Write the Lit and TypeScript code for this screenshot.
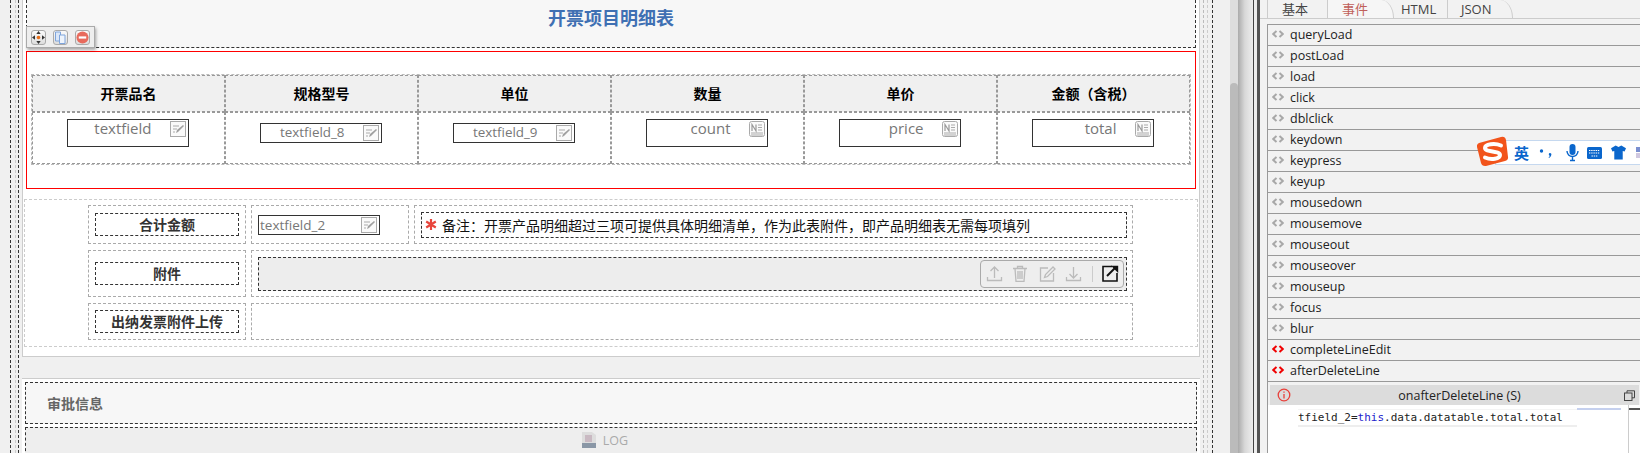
import { LitElement, html, css } from "lit";
import { customElement } from "lit/decorators.js";

const editIcon = html`<svg class="fi" viewBox="0 0 16 16" width="16" height="16"><rect x=".5" y=".5" width="15" height="15" fill="#fafafa" stroke="#aaa"/><path d="M3 5h6M3 8h4M3 11h2" stroke="#aaa" fill="none"/><path d="M6 12l1-3 6-5 1 1-6 6z" fill="#a0a0a0"/></svg>`;
const numIcon = html`<svg class="fi" viewBox="0 0 16 16" width="16" height="16"><rect x=".5" y=".5" width="15" height="15" rx="2" fill="#fafafa" stroke="#aaa"/><path d="M3 10V3.500L7 10V3.500" stroke="#999" stroke-width="1.200" fill="none"/><path d="M9 4h4M9 6.500h4M9 9h4M2 12h12M2 14h12" stroke="#aaa" fill="none"/></svg>`;

const tf = (label: string, big: boolean, num = false) => html`<div class="cell body"><div class="field ${big ? "big" : "small"}"><span>${label}</span>${num ? numIcon : editIcon}</div></div>`;

const rows = ["queryLoad","postLoad","load","click","dblclick","keydown","keypress","keyup","mousedown","mousemove","mouseout","mouseover","mouseup","focus","blur","completeLineEdit","afterDeleteLine"];
const active = new Set(["completeLineEdit","afterDeleteLine"]);

const chevrons = (on: boolean) => html`<svg class="chev" viewBox="0 0 12 8" width="12" height="8"><path d="M4.500 1L1.200 4l3.300 3M7.500 1l3.300 3-3.300 3" fill="none" stroke="${on ? "#f00000" : "#a8a8a8"}" stroke-width="2"/></svg>`;

@customElement("app-root")
export class AppRoot extends LitElement {
  static styles = css`
    :host { display: block; width: 1640px; height: 453px; overflow: hidden; background: #f0f0f0; font-family: "Open Sans", "Noto Sans CJK SC", sans-serif; color: #222; }
    * { box-sizing: border-box; }
    .shell { display: flex; height: 453px; position: relative; }
    .left { width: 1230px; height: 453px; overflow: hidden; flex: none; }
    .o1 { margin-left: 10px; width: 1203px; height: 453px; border-left: 1px dashed #333; border-right: 1px dashed #333; padding: 0 4px; }
    .o2 { height: 453px; border-left: 1px dashed #ccc; border-right: 1px dashed #ccc; padding: 0 3px 0 2px; }
    .o3 { height: 453px; border-left: 1px dashed #333; border-right: 1px dashed #bbb; padding: 0 3px; }
    .panel { background: #fff; border: 1px solid #ccc; border-top: none; height: 357px; padding: 0 3px; }
    .panel2 { margin-top: 21px; height: 75px; background: #fff; border: none; border-top: 1px solid #ccc; padding: 3px 3px 0; }
    .title { position: relative; height: 48px; background: #f7f7f7; border: 1px dashed #333; border-top: none; text-align: center; font-weight: 700; font-size: 18px; line-height: 24px; padding-top: 6px; color: #3f70b3; }
    .handle { position: absolute; left: -1px; top: 26px; width: 69px; height: 22px; background: #eee; border: 1px solid #aaa; box-shadow: 1px 2px 3px rgba(0,0,0,.35); display: flex; gap: 7px; padding: 3px 0 0 4px; }
    .hbtn { width: 15px; height: 15px; border: 1px solid #aaa; border-radius: 3px; background: linear-gradient(#fafafa,#ddd); display: flex; align-items: center; justify-content: center; }
    .red { margin-top: 3px; height: 138px; border: 1px solid #f00; padding: 22px 4px 0 4px; background: #fff; }
    .table { border: 1px dashed #bbb; display: grid; grid-template-columns: repeat(6, 1fr); grid-template-rows: 37px 52px; }
    .cell { border: 1px dashed #999; }
    .head { background: #f0f0f0; font-weight: 700; font-size: 14px; color: #000; display: flex; align-items: center; justify-content: center; padding-bottom: 2px; }
    .body { display: flex; justify-content: center; align-items: flex-start; padding-right: 2px; }
    .field { width: 122px; border: 1px solid #333; position: relative; background: #fff; color: #777; text-align: right; padding-right: 36px; }
    .fi { position: absolute; right: 2px; top: 1px; }
    .big { height: 28px; margin-top: 6px; font-size: 15px; line-height: 16px; }
    .small { height: 20px; margin-top: 10px; font-size: 13.4px; line-height: 17px; }
    .form { margin: 10px -2px 0; height: 148px; border: 1px dashed #ccc; padding: 5px 0 0 63px; display: grid; grid-template-columns: 158px 158px 719px; grid-template-rows: 39px 47px 37px; column-gap: 5px; row-gap: 6px; align-content: start; }
    .fc { border: 1px dashed #aaa; display: flex; align-items: center; padding: 0 6px; }
    .fc.wide { padding-right: 5px; }
    .label { width: 144px; height: 23px; border: 1px dashed #333; font-weight: 700; font-size: 14px; color: #333; display: flex; align-items: center; justify-content: center; padding-bottom: 1px; }
    .f2 { width: 122px; height: 20px; border: 1px solid #333; position: relative; background: #fff; color: #777; font-size: 13.5px; line-height: 18px; padding-left: 1px; }
    .note { flex: 1; height: 26px; border: 1px dashed #333; display: flex; align-items: center; gap: 5px; padding-left: 3px; font-size: 14px; color: #111; }
    .attach { flex: 1; height: 34px; border: 1px dashed #333; background: #ededed; display: flex; justify-content: flex-end; padding: 2px 2px 0 0; }
    .span2 { grid-column: span 2; }
    .tools { width: 144px; height: 28px; border: 1px solid #aaa; border-radius: 4px; background: #eee; display: flex; align-items: center; padding-left: 5px; gap: 9px; }
    .tools .gap { margin-left: 2px; }
    .sep { width: 1px; height: 16px; background: #ccc; margin: 0 0 0 1px; }
    .box { height: 42px; background: #f7f7f7; border: 1px dashed #333; font-weight: 700; font-size: 14px; color: #666; display: flex; align-items: center; padding-left: 21px; }
    .log { margin-top: 3px; height: 40px; background: #eee; border: 1px dashed #333; display: flex; justify-content: center; padding: 4px 0 0 0; font-size: 12.5px; color: #aaa; line-height: 18px; }
    .log-in { display: flex; gap: 7px; height: 20px; margin-left: -12px; }
    .scroll { width: 30px; height: 453px; flex: none; display: flex; }
    .thumbcol { width: 8px; background: #ddd; padding-top: 83px; }
    .thumb { height: 370px; background: #bbb; border-radius: 4px 4px 0 0; }
    .shade { width: 15px; background: linear-gradient(90deg,#aaa,#d8d8d8 45%,#eee); }
    .l1 { width: 1px; background: #444; }
    .l2 { width: 3px; background: #eee; }
    .l3 { width: 3px; background: #555; }
    .right { flex: 1; background: #f2f2f2; padding-left: 7px; min-width: 0; position: relative; overflow: hidden; }
    .tabs { height: 19px; border-bottom: 1px solid #ccc; margin-left: -7px; padding-left: 7px; display: flex; font-size: 13px; color: #444; }
    .tab { width: 60px; height: 18px; flex: none; border-left: 1px solid #ccc; padding: 0 0 0 14px; line-height: 18px; }
    .tab.curve { border-right: 1px solid #ccc; border-top-right-radius: 13px 18px; width: 67px; margin-right: -7px; }
    .tab.on { color: #c0605a; background: #f6f6f6; position: relative; }
    .tab.t3 { padding-left: 14px; border-left: none; }
    .tab.t4 { padding-left: 13px; width: 66px; }
    .list { margin-top: 5px; border-left: 1px solid #999; height: 430px; }
    .row { height: 21px; border-bottom: 1px solid #999; display: flex; align-items: center; font-size: 12.5px; color: #222; padding: 0 0 2px 4px; gap: 6px; }
    .row.first { height: 22px; border-top: 1px solid #999; }
    .chev { flex: none; }
    .hd { margin: 3px 0 0 2px; height: 20px; background: #dcdcdc; display: flex; align-items: center; padding: 0 4px 0 7px; font-size: 12.5px; width: 369px; position: relative; }
    .hd-t { flex: 1; text-align: center; padding-left: 4px; }
    .editor { position: relative; height: 49px; background: #fff; padding: 4px 0 0 30px; font-family: "DejaVu Sans Mono", monospace; font-size: 11px; color: #222; display: flex; }
    .line { width: 279px; height: 18px; border-bottom: 2px solid #eee; border-top: 1px solid #f4f4f4; line-height: 15px; white-space: pre; flex: none; }
    .kw { color: #22c; }
    .mini { position: absolute; left: 309px; top: 0; width: 52px; height: 49px; border-right: 1px solid #ccc; background: #fff; }
    .mini-l { height: 2px; width: 44px; background: #c5d0ee; margin-top: 3px; }
    .mdark { position: absolute; left: 361px; top: 3px; width: 12px; height: 2px; background: #555; }
    .ime { position: absolute; left: 1477px; top: 136px; width: 163px; height: 31px; }
    .ime-bar { position: absolute; left: 18px; top: 4px; right: 0; height: 25px; background: #fff; border: 1px solid #c5d8ef; border-right: none; display: flex; align-items: center; padding-left: 18px; color: #0a66cc; font-weight: 700; font-size: 15px; }
    .ime-logo { position: absolute; left: 0; top: 0; }
    .ime-s { margin-left: 10px; display: block; flex: none; }
    .ime-s.m { margin-left: 13px; }
    .ime-s.k { margin-left: 8px; }
    .ime-s.t { margin-left: 9px; }
  `;

  render() {
    const heads = ["开票品名","规格型号","单位","数量","单价","金额（含税）"];
    return html`<div class="shell">
      <div class="left"><div class="o1"><div class="o2"><div class="o3">
        <div class="panel">
          <div class="title">开票项目明细表
            <div class="handle">
              <div class="hbtn"><svg width="13" height="13" viewBox="0 0 13 13"><path d="M6.500 0l2.200 3h-4.400zM6.500 13l2.200-3h-4.400zM0 6.500l3-2.200v4.400zM13 6.500l-3-2.200v4.400z" fill="#333"/><circle cx="6.500" cy="6.500" r="1.800" fill="#e8701a"/></svg></div>
              <div class="hbtn"><svg width="13" height="13" viewBox="0 0 13 13"><path d="M1.500 1h5v9h-5z" fill="#dbe7f8" stroke="#7fa5dc"/><path d="M5.500 4h5.500v8.500h-5.500z" fill="#eef4fc" stroke="#7fa5dc"/></svg></div>
              <div class="hbtn"><svg width="13" height="13" viewBox="0 0 14 14"><circle cx="7" cy="7" r="6.500" fill="#e86a5c"/><rect x="3" y="5.800" width="8" height="2.400" fill="#fff"/></svg></div>
            </div>
          </div>
          <div class="red"><div class="table">
            ${heads.map(h => html`<div class="cell head">${h}</div>`)}
            ${tf("textfield", true)}${tf("textfield_8", false)}${tf("textfield_9", false)}${tf("count", true, true)}${tf("price", true, true)}${tf("total", true, true)}
          </div></div>
          <div class="form">
            <div class="fc"><div class="label">合计金额</div></div>
            <div class="fc"><div class="f2">textfield_2${editIcon}</div></div>
            <div class="fc wide"><div class="note"><svg width="12" height="13" viewBox="0 0 12 13"><path d="M6 1v11M1.200 3.500l9.600 6M10.800 3.500l-9.600 6" stroke="#e8453c" stroke-width="2.200"/></svg><span>备注：开票产品明细超过三项可提供具体明细清单，作为此表附件，即产品明细表无需每项填列</span></div></div>
            <div class="fc"><div class="label">附件</div></div>
            <div class="fc span2 wide"><div class="attach"><div class="tools">
              <svg width="17" height="17" viewBox="0 0 17 17" fill="none" stroke="#bbb" stroke-width="1.300"><path d="M8.500 13V2M4.500 6l4-4 4 4M1.500 12v3.500h14V12"/></svg>
              <svg width="16" height="17" viewBox="0 0 16 17" fill="none" stroke="#bbb" stroke-width="1.300"><path d="M1 3.500h14M5.500 3.500V1.500h5v2M3 3.500l1 13h8l1-13M6 6v8M8 6v8M10 6v8"/></svg>
              <svg class="gap" width="17" height="17" viewBox="0 0 17 17" fill="none" stroke="#bbb" stroke-width="1.300"><path d="M9 3H1.500v13h13V8"/><path d="M5.500 12.500l1-3L14 2l2 2-7.500 7.500z"/></svg>
              <svg width="17" height="17" viewBox="0 0 17 17" fill="none" stroke="#bbb" stroke-width="1.300"><path d="M8.500 2v11M4.500 9l4 4 4-4M1.500 12v3.500h14V12"/></svg>
              <div class="sep"></div>
              <svg width="17" height="17" viewBox="0 0 17 17" fill="none" stroke="#111"><path d="M10 1.500H1v14.500h14V8" stroke-width="1.600"/><path d="M5 11l8-8" stroke-width="2"/><path d="M9 .8h7.200V8z" fill="#111" stroke="none"/></svg>
            </div></div></div>
            <div class="fc"><div class="label">出纳发票附件上传</div></div>
            <div class="fc span2"></div>
          </div>
        </div>
        <div class="panel panel2">
          <div class="box">审批信息</div>
          <div class="log"><div class="log-in"><svg width="14" height="16" viewBox="0 0 14 16"><path d="M0 0h10l4 3v13H0z" fill="#ddd"/><rect x="3" y="3" width="7" height="7" fill="#c9b9c2"/><rect y="11" width="14" height="5" fill="#8a97a6"/></svg><span>LOG</span></div></div>
        </div>
      </div></div></div></div>

      <div class="scroll"><div class="thumbcol"><div class="thumb"></div></div><div class="shade"></div><div class="l1"></div><div class="l2"></div><div class="l3"></div></div>

      <div class="right">
        <div class="tabs">
          <div class="tab">基本</div>
          <div class="tab curve on">事件</div>
          <div class="tab t3">HTML</div>
          <div class="tab curve t4">JSON</div>
        </div>
        <div class="list">
          ${rows.map((r, i) => html`<div class="row ${i === 0 ? "first" : ""}">${chevrons(active.has(r))}<span>${r}</span></div>`)}
          <div class="hd">
            <svg width="14" height="14" viewBox="0 0 14 14" fill="none" stroke="#e8403a" stroke-width="1.300"><circle cx="7" cy="7" r="5.800"/><path d="M7 3.500v1.200M7 6v4.500"/></svg>
            <span class="hd-t">onafterDeleteLine (S)</span>
            <svg width="11" height="11" viewBox="0 0 11 11" fill="none" stroke="#444"><rect x=".5" y="3" width="7.500" height="7.500"/><path d="M3 3V.8h7.500v7H8"/></svg>
          </div>
          <div class="editor"><div class="line">tfield_2=<span class="kw">this</span>.data.datatable.total.total</div>
            <div class="mini"><div class="mini-l"></div></div><div class="mdark"></div>
          </div>
        </div>
      </div>

      <div class="ime">
        <div class="ime-bar">
          <span>英</span>
          <svg class="ime-s" width="14" height="16" viewBox="0 0 14 16"><circle cx="2.500" cy="6" r="1.700" fill="#0a66cc"/><path d="M11 8c2 0 2 3-1 5l-.5-.6c1-.8 1.300-1.500 1-2-1-.2-1-2.400.5-2.400z" fill="#0a66cc"/></svg>
          <svg class="ime-s m" width="13" height="18" viewBox="0 0 13 18"><rect x="3.500" y="0" width="6" height="11" rx="3" fill="#0a66cc"/><path d="M1 7a5.500 5.500 0 0 0 11 0M6.500 13v3M4 16.500h5" fill="none" stroke="#0a66cc" stroke-width="1.400"/></svg>
          <svg class="ime-s k" width="15" height="12" viewBox="0 0 15 12"><rect width="15" height="12" rx="1.500" fill="#0a66cc"/><path d="M2 3.500h11M2 6h11M4.500 9h6" stroke="#fff" stroke-width="1.100" stroke-dasharray="1.400 .8"/></svg>
          <svg class="ime-s t" width="15" height="15" viewBox="0 0 16 15"><path d="M5 0l3 1.500L11 0l5 3-1.500 3.500-2-.6V15H3.500V5.900l-2 .6L0 3z" fill="#0a66cc"/></svg>
          <svg class="ime-s" width="8" height="12" viewBox="0 0 8 12"><rect width="8" height="5" fill="#7a8fd0"/><rect y="6" width="8" height="5" fill="#d0c8e0"/></svg>
        </div>
        <svg class="ime-logo" width="32" height="31" viewBox="0 0 32 31"><path d="M2 7L24 1q4-1 5 3l2 17q.5 3-3 4L9 30q-4 .5-5-3L0 11q-.5-3 2-4z" fill="#f2541b"/><path d="M24 9.500C18 7 8 8 8 12c0 4.500 15 2.500 15 7 0 4-9 5-15 2.500" fill="none" stroke="#fff" stroke-width="4" stroke-linecap="round"/></svg>
      </div>
    </div>`;
  }
}
